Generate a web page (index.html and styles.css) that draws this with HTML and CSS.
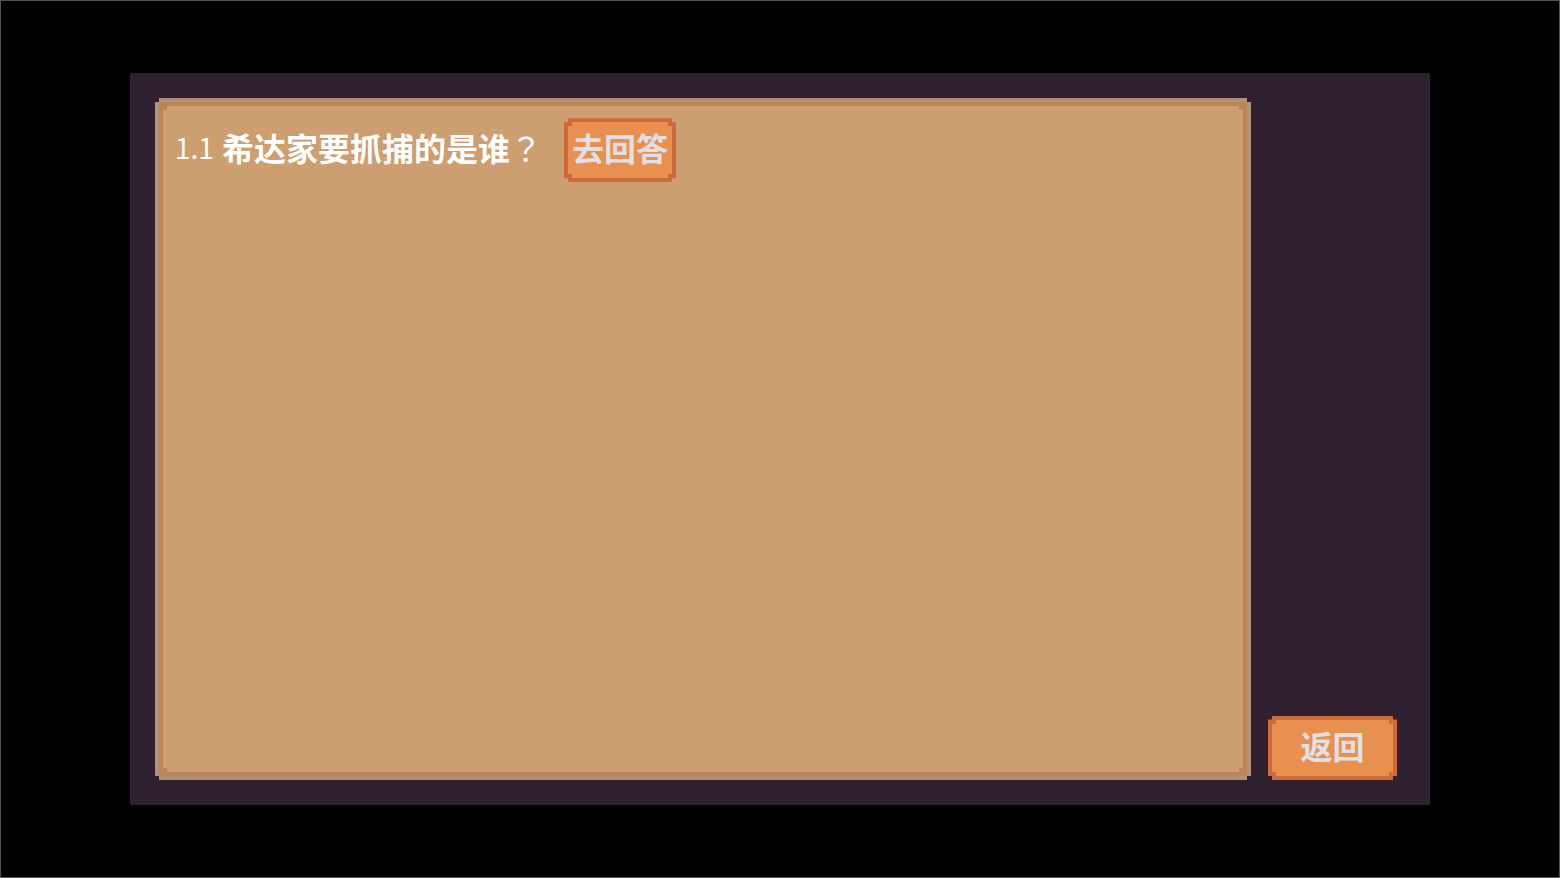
FILE: index.html
```
<!DOCTYPE html>
<html lang="zh-CN">

<head>
    <meta charset="UTF-8">
    <meta name="viewport" content="width=device-width, initial-scale=1.0">
    <title>问题列表</title>
    <link rel="stylesheet" href="styles.css">
</head>

<body>
    <main class="stage">
        <!-- 问题面板 -->
        <section class="panel">
            <div class="question">
                <span class="number">1.1</span>
                <span class="title">希达家要抓捕的是谁<span class="mark" lang="zh-TW">？</span></span>
                <button type="button" class="pixel-btn">去回答</button>
            </div>
        </section>
        <!-- 返回按钮 -->
        <button type="button" class="pixel-btn back-btn">返回</button>
    </main>
</body>

</html>
```
FILE: styles.css
```
* {
    box-sizing: border-box;
}

body {
    margin: 0;
    min-height: 100vh;
    display: flex;
    justify-content: center;
    align-items: center;
    border: 1px solid #545454;
    background-color: #000;
    font-family: "Noto Sans CJK SC", sans-serif;
}

/* 游戏画面，占窗口的六分之五 */
.stage {
    width: calc(100vw * 5 / 6);
    min-height: calc(100vh * 5 / 6);
    padding: 25px 33px 25px 25px;
    display: flex;
    align-items: stretch;
    gap: 17px;
    background-color: #2f2130;
}

/* 像素风边框：切掉四个角，再在内侧四角补上小方块 */
.panel,
.pixel-btn {
    --corner: linear-gradient(var(--edge), var(--edge)) no-repeat;
    clip-path: polygon(4px 0, calc(100% - 4px) 0, calc(100% - 4px) 4px, 100% 4px,
            100% calc(100% - 4px), calc(100% - 4px) calc(100% - 4px), calc(100% - 4px) 100%, 4px 100%,
            4px calc(100% - 4px), 0 calc(100% - 4px), 0 4px, 4px 4px);
}

.panel {
    --edge: #bd845c;
    flex: 1;
    padding: 16px 12px;
    border: 4px solid #b09378;
    box-shadow: inset 0 0 0 4px var(--edge);
    background:
        var(--corner) 0 0 / 8px 8px,
        var(--corner) 100% 0 / 8px 8px,
        var(--corner) 0 100% / 8px 8px,
        var(--corner) 100% 100% / 8px 8px,
        #cd9e6f;
}

.question {
    display: flex;
    align-items: center;
    gap: 8px;
    padding-left: 4px;
    color: #fff;
    font-size: 32px;
    font-weight: bold;
}

.number,
.title {
    padding-bottom: 6px;
}

.number {
    font-size: 28px;
    font-weight: normal;
}

.title {
    margin-right: 14px;
}

/* 问号在全角格子里居中 */
.mark {
    font-family: "Noto Sans CJK TC", sans-serif;
    font-weight: normal;
}

.pixel-btn {
    --edge: #cf6a3d;
    height: 64px;
    padding: 0 4px 6px;
    border: 4px solid var(--edge);
    background:
        var(--corner) 0 0 / 4px 4px,
        var(--corner) 100% 0 / 4px 4px,
        var(--corner) 0 100% / 4px 4px,
        var(--corner) 100% 100% / 4px 4px,
        #e8904f;
    color: #e2e0e4;
    font-family: inherit;
    font-size: 32px;
    font-weight: bold;
    line-height: 48px;
    cursor: pointer;
}

.pixel-btn:hover {
    color: #fff;
}

.back-btn {
    width: 129px;
    align-self: flex-end;
}
```
